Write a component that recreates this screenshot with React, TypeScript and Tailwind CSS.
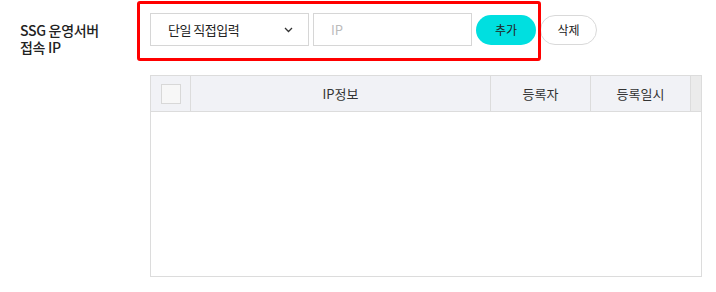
import React from "react";

export default function App() {
  return (
    <div
      className="relative w-[716px] h-[292px] bg-white text-[#222]"
      style={{ fontFamily: '"Noto Sans CJK KR", "Noto Sans", sans-serif' }}
    >
      <div className="flex pt-[13px]">
        <div className="w-[150px] shrink-0 pl-[20px] pt-[9px] text-[14px] font-medium text-[#222] tracking-[-0.3px]">
          <div className="h-[17px] leading-[17px]">SSG 운영서버</div>
          <div className="h-[17px] leading-[17px]">접속 IP</div>
        </div>
        <div className="flex flex-col">
          <div className="flex items-center gap-[4px] h-[33px]">
            <div className="w-[159px] h-[33px] border border-[#d6d6d6] bg-white flex items-center justify-between pl-[17px] pr-[15px] text-[13px] text-[#222] tracking-[-0.5px]">
              <span>단일 직접입력</span>
              <svg width="9" height="6" viewBox="0 0 9 6" fill="none">
                <path d="M1 1l3.5 3.5L8 1" stroke="#333" strokeWidth="1.3" />
              </svg>
            </div>
            <div className="w-[159px] h-[33px] border border-[#d6d6d6] bg-white flex items-center pl-[17px] text-[13px] text-[#bbb]">
              IP
            </div>
            <button className="w-[60px] h-[30px] rounded-full bg-[#00dfe0] text-[12px] text-[#222] flex items-center justify-center">
              추가
            </button>
            <button className="w-[57px] h-[30px] rounded-full bg-white border border-[#d9d9d9] text-[12px] text-[#222] flex items-center justify-center">
              삭제
            </button>
          </div>
          <div className="mt-[29px] w-[552px] h-[202px] border border-[#dcdcdc] flex flex-col">
            <div className="flex h-[36px] border-b border-[#dcdcdc] bg-[#ebebeb] text-[13px] text-[#333]">
              <div className="w-[40px] bg-[#f1f2f6] border-r border-[#dcdcdc] flex items-center justify-center">
                <div className="w-[20px] h-[20px] border border-[#d8d8d8] bg-[#f7f7f7]" />
              </div>
              <div className="w-[300px] bg-[#f1f2f6] border-r border-[#dcdcdc] flex items-center justify-center">
                IP정보
              </div>
              <div className="w-[100px] bg-[#f1f2f6] border-r border-[#dcdcdc] flex items-center justify-center">
                등록자
              </div>
              <div className="w-[100px] bg-[#f1f2f6] border-r border-[#dcdcdc] flex items-center justify-center">
                등록일시
              </div>
              <div className="flex-1" />
            </div>
            <div className="flex-1 bg-white" />
          </div>
        </div>
      </div>
      <div className="absolute left-[137px] top-[1px] w-[404px] h-[60px] border-[3px] border-[#ff0000] rounded-[3px] pointer-events-none" />
    </div>
  );
}
